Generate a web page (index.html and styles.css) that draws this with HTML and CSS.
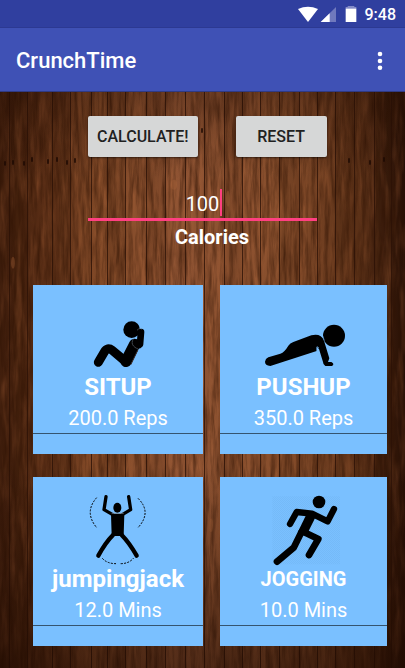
FILE: index.html
```html
<!DOCTYPE html>
<html lang="en">
<head>
<meta charset="utf-8">
<meta name="viewport" content="width=device-width, initial-scale=1">
<title>CrunchTime</title>
<link rel="stylesheet" href="styles.css">
</head>
<body>
<div class="app">
  <div class="status-bar">
    <svg class="status-icons" viewBox="0 0 180 51" aria-hidden="true">
      <path fill="#fff" d="M3 9Q33-4 63 9L33 48Z"/>
      <path fill="#7079bd" d="M117 3V48H71Z"/>
      <path fill="#fff" d="M98 22V48H71Z"/>
      <path fill="#838bc7" d="M146 3h32v6h-32zM152 0h20v4h-20z"/>
      <path fill="#fff" d="M146 8h32v40h-32z"/>
    </svg>
    <time class="clock">9:48</time>
  </div>
  <header class="toolbar">
    <h1 class="app-title">CrunchTime</h1>
    <button class="menu-button" type="button" aria-label="More options">
      <svg viewBox="0 0 6 20" width="6" height="20" aria-hidden="true"><g fill="#fff"><circle cx="3" cy="3" r="2.3"/><circle cx="3" cy="10" r="2.3"/><circle cx="3" cy="16.700" r="2.3"/></g></svg>
    </button>
  </header>
  <main class="content">
    <svg class="wood" viewBox="0 91 405 577" preserveAspectRatio="none" aria-hidden="true">
      <defs>
        <linearGradient id="base">
          <stop offset="0" stop-color="#3d1c0b"/><stop offset=".12" stop-color="#5c2f16"/><stop offset=".25" stop-color="#814927"/><stop offset=".45" stop-color="#905433"/><stop offset=".7" stop-color="#874e2c"/><stop offset=".88" stop-color="#5c3117"/><stop offset="1" stop-color="#260f05"/>
        </linearGradient>
        <linearGradient id="shade" x2="0" y2="1">
          <stop offset="0" stop-color="#1b0800" stop-opacity=".3"/><stop offset=".15" stop-color="#1b0800" stop-opacity="0"/><stop offset=".65" stop-color="#1b0800" stop-opacity="0"/><stop offset="1" stop-color="#1b0800" stop-opacity=".55"/>
        </linearGradient>
        <filter id="grain" x="0" y="0" width="1" height="1" color-interpolation-filters="sRGB">
          <feTurbulence type="fractalNoise" baseFrequency=".24 .025" numOctaves="4" seed="8"/>
          <feColorMatrix values="0 0 0 0 .18  0 0 0 0 .07  0 0 0 0 .01  1.1 0 0 0 -.38"/>
        </filter>
        <filter id="light" x="0" y="0" width="1" height="1" color-interpolation-filters="sRGB">
          <feTurbulence type="fractalNoise" baseFrequency=".13 .02" numOctaves="3" seed="21"/>
          <feColorMatrix values="0 0 0 0 .72  0 0 0 0 .42  0 0 0 0 .24  .7 0 0 0 -.3"/>
        </filter>
      </defs>
      <rect y="91" width="405" height="577" fill="url(#base)"/>
      <path fill="#210b02" fill-opacity=".14" d="M9 91h18v577H9zM52 91h18v577H52zM107 91h18v577h-18zM146 91h19v577h-19zM224 91h18v577h-18zM279 91h20v577h-20zM335 91h19v577h-19zM374 91h17v577h-17z"/>
      <rect y="91" width="405" height="577" filter="url(#light)"/>
      <rect y="91" width="405" height="577" filter="url(#grain)"/>
      <path fill="none" stroke="#2c1206" stroke-opacity=".8" d="M9.500 91v577M27.500 91v577M52.500 91v577M70.500 91v577M91.500 91v577M107.500 91v577M125.500 91v577M146.500 91v577M165.500 91v577M185.500 91v577M204.500 91v577M224.500 91v577M242.500 91v577M260.500 91v577M279.500 91v577M299.500 91v577M317.500 91v577M335.500 91v577M354.500 91v577M374.500 91v577M391.500 91v577"/>
      <path fill="none" stroke="#1b0802" stroke-opacity=".75" stroke-width="2" stroke-linecap="round" stroke-dasharray="3 700" d="M5 161v9M13 160v9M24 161v9M32 157v9M48 159v9M57 157v9M67 160v9M75 158v9M202 128v9M303 134v9M349 158v9M370 160v9M384 157v9"/>
      <g fill="#a96438" fill-opacity=".35"><ellipse cx="13" cy="262" rx="2" ry="6"/><ellipse cx="228" cy="198" rx="2" ry="8"/><ellipse cx="174" cy="184" rx="3" ry="5"/><ellipse cx="211" cy="525" rx="2" ry="7"/></g>
      <rect y="91" width="405" height="577" fill="url(#shade)"/>
    </svg>
    <form class="entry">
      <div class="actions">
        <button class="action" type="button">CALCULATE!</button>
        <button class="action" type="button">RESET</button>
      </div>
      <div class="amount">
        <input class="amount-input" id="calories" type="text" inputmode="numeric" value="100">
        <span class="caret"></span>
      </div>
      <label class="amount-label" for="calories">Calories</label>
    </form>
    <section class="cards">
      <article class="card">
        <svg class="art" viewBox="24 30 510 258" aria-hidden="true">
          <circle cx="320" cy="164" r="25"/>
          <g fill="none" stroke="#000" stroke-linecap="round" stroke-linejoin="round">
            <path stroke-width="27" d="M220 262L238 231Q247 215 262 226L300 258"/>
            <path stroke-width="34" d="M303 259L329 208"/>
            <path stroke-width="20" d="M348 171L345 208Q338 216 328 204"/>
            <path stroke="#8a9ba8" stroke-width="1.500" stroke-dasharray="3 3" d="M337 165Q344 158 350 162M325 192Q314 211 339 222"/>
            <path stroke="#3b2a27" stroke-width="3" d="M318 268L338 226"/>
          </g>
        </svg>
        <label class="name" for="situp">SITUP</label>
        <input class="value" id="situp" type="text" value="200.0 Reps">
      </article>
      <article class="card">
        <svg class="art" viewBox="30 30 501 258" aria-hidden="true">
          <circle cx="372" cy="182" r="33"/>
          <path d="M175 247L211 236Q224 231 235 212Q240 205 250 201L304 181Q333 174 342 197L358 250L354 261L364 261Q375 267 366 273L346 273Q339 269 339 261L327 222L320 216V228L181 273Q165 271 165 260Q166 251 175 247Z"/>
          <path fill="none" stroke="#7ac0ff" stroke-width="2" d="M321 228v-13l6 4M338 182l5 15"/>
        </svg>
        <label class="name" for="pushup">PUSHUP</label>
        <input class="value" id="pushup" type="text" value="350.0 Reps">
      </article>
      <article class="card">
        <svg class="art" viewBox="24 36 510 258" overflow="visible" aria-hidden="true">
          <ellipse cx="277" cy="128" rx="12" ry="15"/>
          <path d="M258 146h40l-2 67h-36z"/>
          <g fill="none" stroke="#000">
            <path stroke-width="10" stroke-linecap="round" stroke-linejoin="round" d="M243 95L237 134L263 149M311 95L317 134L292 149"/>
            <path stroke-width="13" stroke-linecap="round" d="M264 210Q242 232 220 272M290 210Q312 232 335 272"/>
            <path stroke-width="3" stroke-dasharray="6 4" d="M215 98Q176 142 216 189M339 100Q382 142 338 189M232 280Q246 296 273 296M287 296Q312 296 326 279"/>
            <path stroke="#87949e" stroke-width="2" d="M260 145h36"/>
          </g>
        </svg>
        <label class="name" for="jumpingjack">jumpingjack</label>
        <input class="value" id="jumpingjack" type="text" value="12.0 Mins">
      </article>
      <article class="card">
        <svg class="art" viewBox="30 36 501 258" overflow="visible" aria-hidden="true">
          <defs><pattern id="hatch" width="6" height="6" patternUnits="userSpaceOnUse"><path stroke="#69acea" d="M0 6L6 0"/></pattern></defs>
          <path fill="url(#hatch)" d="M187 94h203v204H187z"/>
          <circle cx="327" cy="111" r="19"/>
          <g fill="none" stroke="#000" stroke-linecap="round" stroke-linejoin="round">
            <path stroke-width="19" d="M240 177L260 141L306 146L353 169L372 132"/>
            <path stroke-width="28" stroke-linecap="butt" d="M306 146L276 207"/>
            <path stroke-width="20" d="M274 202L251 248L201 290M283 202L325 222L297 270"/>
          </g>
        </svg>
        <label class="name name-small" for="jogging">JOGGING</label>
        <input class="value" id="jogging" type="text" value="10.0 Mins">
      </article>
    </section>
  </main>
</div>
</body>
</html>
```

FILE: styles.css
```css
* {
  box-sizing: border-box;
}

body {
  margin: 0;
  font-family: Roboto, "Liberation Sans", sans-serif;
  color: #fff;
}

.app {
  display: flex;
  flex-direction: column;
  min-height: 100vh;
}

.status-bar {
  display: flex;
  align-items: center;
  justify-content: flex-end;
  gap: 8px;
  height: 28px;
  padding: 2px 9px 0 0;
  background: #303f9f;
  border-bottom: 1px solid #2c3992;
}

.status-icons {
  width: 60px;
  height: 17px;
}

.clock {
  font-size: 16px;
  font-weight: 500;
  line-height: 20px;
}

.toolbar {
  display: flex;
  align-items: center;
  justify-content: space-between;
  height: 64px;
  padding: 2px 14px 0 16px;
  background: #3f51b5;
  border-bottom: 1px solid #303a83;
}

.app-title {
  margin: 0;
  font-size: 22px;
  font-weight: 500;
  line-height: 28px;
}

.menu-button {
  display: flex;
  padding: 8px;
  border: 0;
  background: none;
}

.content {
  position: relative;
  flex: 1;
  padding: 24px 0 22px;
  background: #5c3219;
  overflow: hidden;
}

.wood {
  position: absolute;
  inset: 0;
  width: 100%;
  height: 100%;
}

.entry {
  position: relative;
  display: flex;
  flex-direction: column;
  margin: 0 69px 0 88px;
}

.actions {
  display: flex;
  gap: 38px;
}

.action {
  height: 41px;
  min-width: 91px;
  padding: 0 9px;
  border: 0;
  border-radius: 2px;
  background: #d6d7d7;
  box-shadow: 0 1px 2px rgba(0, 0, 0, 0.5);
  color: #212121;
  font: 500 16px/20px Roboto, "Liberation Sans", sans-serif;
}

.amount {
  position: relative;
  margin: 30px 19px 0 0;
}

.amount-input {
  display: block;
  width: 100%;
  height: 34px;
  padding: 2px 0 0;
  border: 0;
  border-bottom: 3px solid #ff4081;
  background: none;
  color: #fff;
  font: 400 20px/28px Roboto, "Liberation Sans", sans-serif;
  text-align: center;
}

.caret {
  position: absolute;
  top: 2px;
  left: calc(50% + 17px);
  width: 2px;
  height: 27px;
  background: #ff4081;
}

.amount-label {
  margin-top: 4px;
  font-size: 20px;
  font-weight: 700;
  line-height: 24px;
  text-align: center;
}

.cards {
  position: relative;
  display: grid;
  grid-template-columns: 170fr 167fr;
  gap: 23px 17px;
  margin: 36px 18px 0 33px;
}

.card {
  display: flex;
  flex-direction: column;
  padding-bottom: 20px;
  background: #7ac0ff;
}

.art {
  display: block;
  width: 100%;
  height: 86px;
}

.name {
  position: relative;
  height: 32px;
  font-size: 24px;
  font-weight: 700;
  line-height: 32px;
  text-align: center;
}

.name-small {
  font-size: 20px;
}

.value {
  width: 100%;
  height: 31px;
  padding: 0 0 1px;
  border: 0;
  border-bottom: 1px solid #35546f;
  background: none;
  color: #fff;
  font: 400 20px/28px Roboto, "Liberation Sans", sans-serif;
  text-align: center;
}
```
